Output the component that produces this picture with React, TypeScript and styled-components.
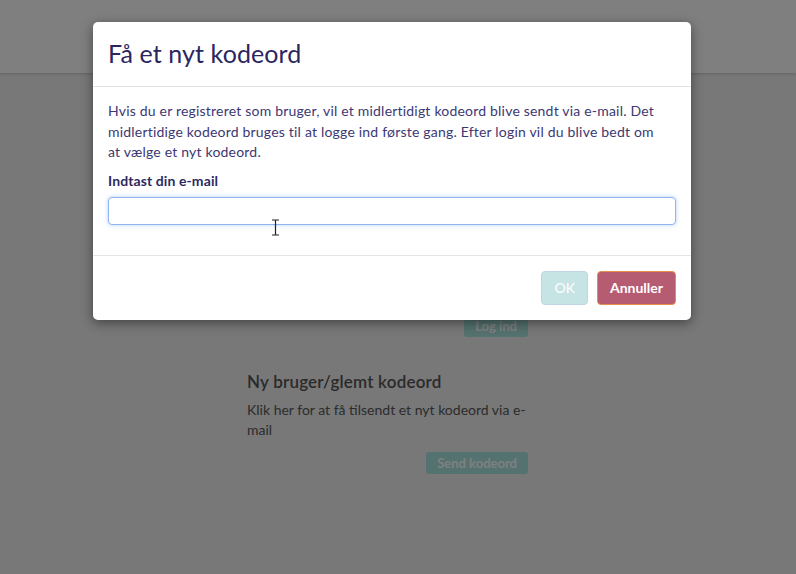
import React from 'react';
import styled, { createGlobalStyle } from 'styled-components';

const GlobalStyle = createGlobalStyle`
    html, body {
        margin: 0;
        padding: 0;
        height: 100%;
        overflow: hidden;
    }
    body {
        font-family: Lato, 'Open Sans', Arial, sans-serif;
        background: #f0f0f0;
    }
    #root {
        height: 100%;
    }
`;

export const Side = styled.div`
    position: relative;
    height: 574px;
    background: #f0f0f0;
`;

export const Topbar = styled.header`
    height: 73px;
    background: #ffffff;
    box-shadow: 0 1px 3px rgba(0, 0, 0, 0.18);
`;

export const Indhold = styled.main`
    display: flex;
    justify-content: center;
    padding: 242px 0 0 0;
`;

export const Kolonne = styled.section`
    width: 281px;
    margin-left: -21px;
    display: flex;
    flex-direction: column;
`;

export const SideKnap = styled.button`
    align-self: flex-end;
    height: 22px;
    padding: 0 11px;
    border: none;
    border-radius: 3px;
    background: #a8e4df;
    color: #ffffff;
    font-family: inherit;
    font-size: 13px;
    font-weight: 700;
`;

export const Overskrift = styled.h2`
    margin: 34px 0 8px 0;
    font-size: 17px;
    font-weight: 600;
    color: #555555;
    letter-spacing: 0.2px;
`;

export const Tekst = styled.p`
    margin: 0 0 12px 0;
    font-size: 14px;
    line-height: 20px;
    color: #585858;
`;

export const Baggrund = styled.div`
    position: absolute;
    inset: 0;
    background: rgba(0, 0, 0, 0.5);
    padding-right: 12px;
`;

export const Dialog = styled.div`
    width: 598px;
    margin: 22px auto 0 auto;
    background: #ffffff;
    border-radius: 5px;
    box-shadow: 0 3px 12px rgba(0, 0, 0, 0.45);
`;

export const DialogHoved = styled.div`
    height: 64px;
    display: flex;
    align-items: center;
    padding: 0 15px;
    border-bottom: 1px solid #e3e3e3;
`;

export const DialogTitel = styled.h1`
    margin: -3px 0 0 0;
    font-size: 25px;
    font-weight: 400;
    color: #2a2660;
    letter-spacing: 0.1px;
`;

export const DialogKrop = styled.div`
    padding: 14px 15px 30px 15px;
    border-bottom: 1px solid #e5e5e5;
`;

export const Beskrivelse = styled.p`
    margin: 0 0 9px 0;
    padding-right: 12px;
    font-size: 14px;
    line-height: 20.5px;
    color: #3c3873;
    letter-spacing: 0.2px;
`;

export const Etiket = styled.label`
    display: block;
    margin-bottom: 8px;
    font-size: 14px;
    font-weight: 700;
    color: #2d2a62;
    letter-spacing: 0.1px;
`;

export const Felt = styled.input`
    box-sizing: border-box;
    display: block;
    width: 100%;
    height: 28px;
    padding: 0 6px;
    border: 1px solid #8fb3ec;
    border-radius: 4px;
    box-shadow: 0 0 4px rgba(100, 150, 230, 0.45);
    font-family: inherit;
    font-size: 14px;
    outline: none;
`;

export const DialogFod = styled.div`
    display: flex;
    justify-content: flex-end;
    gap: 9px;
    padding: 15px;
`;

export const Knap = styled.button<{ $variant: 'ok' | 'annuller' }>`
    height: 34px;
    padding: 0 12px;
    border-radius: 4px;
    border: 1px solid ${(p) => (p.$variant === 'ok' ? '#c2d3e2' : '#e2904c')};
    background: ${(p) => (p.$variant === 'ok' ? '#c6e4e4' : '#b65c72')};
    color: #ffffff;
    font-family: inherit;
    font-size: 14px;
    font-weight: ${(p) => (p.$variant === 'ok' ? 400 : 700)};
`;

export const Markør = styled.svg`
    position: absolute;
    left: 271px;
    top: 219px;
`;

const App: React.FC = () => {
    return (
        <>
            <GlobalStyle />
            <Side>
                <Topbar />
                <Indhold>
                    <Kolonne>
                        <SideKnap>Log ind</SideKnap>
                        <Overskrift>Ny bruger/glemt kodeord</Overskrift>
                        <Tekst>Klik her for at få tilsendt et nyt kodeord via e-mail</Tekst>
                        <SideKnap>Send kodeord</SideKnap>
                    </Kolonne>
                </Indhold>
                <Baggrund>
                    <Dialog>
                        <DialogHoved>
                            <DialogTitel>Få et nyt kodeord</DialogTitel>
                        </DialogHoved>
                        <DialogKrop>
                            <Beskrivelse>
                                Hvis du er registreret som bruger, vil et midlertidigt kodeord blive sendt via
                                e-mail. Det midlertidige kodeord bruges til at logge ind første gang. Efter login
                                vil du blive bedt om at vælge et nyt kodeord.
                            </Beskrivelse>
                            <Etiket htmlFor="email">Indtast din e-mail</Etiket>
                            <Felt id="email" type="email" autoFocus />
                        </DialogKrop>
                        <DialogFod>
                            <Knap $variant="ok">OK</Knap>
                            <Knap $variant="annuller">Annuller</Knap>
                        </DialogFod>
                    </Dialog>
                </Baggrund>
                {/* tekstmarkør over feltet */}
                <Markør width="9" height="17" viewBox="0 0 9 17">
                    <path d="M1 1h7M4.5 1v15M1 16h7" stroke="#222" strokeWidth="1.2" fill="none" />
                </Markør>
            </Side>
        </>
    );
};

export default App;
